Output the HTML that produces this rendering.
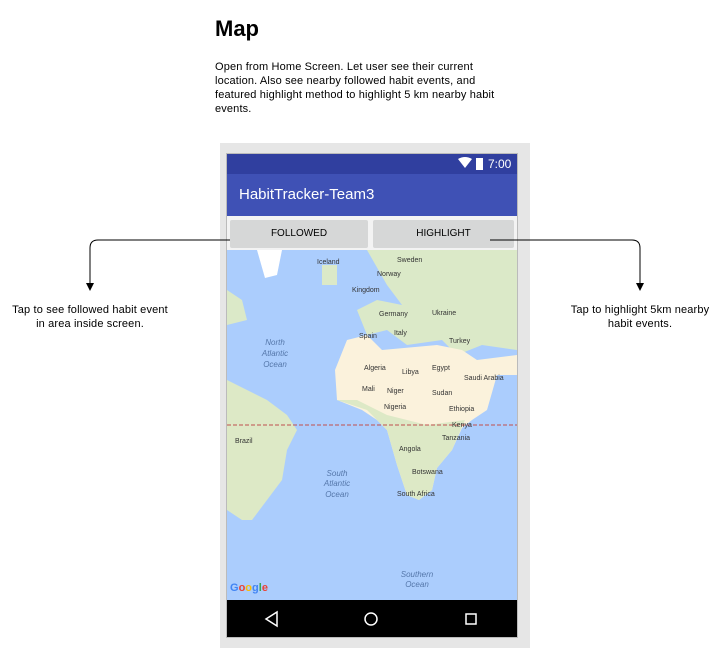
<!DOCTYPE html>
<html><head><style>
body{margin:0;width:721px;height:648px;background:#fff;font-family:"Liberation Sans",Arial,sans-serif;position:relative;overflow:hidden}
.a{position:absolute}
</style></head><body>
<div class="a" style="left:215px;top:16px;font-size:22px;font-weight:bold;color:#000">Map</div>
<div class="a" style="left:215px;top:60px;white-space:nowrap;font-size:11px;letter-spacing:0.15px;line-height:14px;color:#000">Open from Home Screen. Let user see their current<br>location. Also see nearby followed habit events, and<br>featured highlight method to highlight 5 km nearby habit<br>events.</div>
<div class="a" style="left:220px;top:143px;width:310px;height:505px;background:#e6e6e6"></div>
<div class="a" style="left:226px;top:153px;width:292px;height:485px;background:#bbb"></div>
<div class="a" style="left:227px;top:154px;width:290px;height:20px;background:#303f9f"></div>
<div class="a" style="left:488px;top:157px;font-size:12px;color:#fff">7:00</div>
<svg class="a" style="left:458px;top:157px" width="30" height="14"><path d="M0 2 Q7 -2 14 2 L7 11Z" fill="#fff"/><rect x="18" y="1" width="7" height="12" fill="#fff"/></svg>
<div class="a" style="left:227px;top:174px;width:290px;height:42px;background:#3f51b5"></div>
<div class="a" style="left:239px;top:186px;font-size:15px;color:#fff">HabitTracker-Team3</div>
<div class="a" style="left:227px;top:216px;width:290px;height:34px;background:#f3f3f3"></div>
<div class="a" style="left:230px;top:220px;width:138px;height:28px;background:#d6d7d7;border-radius:2px;font-size:10px;text-align:center;line-height:28px">FOLLOWED</div>
<div class="a" style="left:373px;top:220px;width:141px;height:28px;background:#d6d7d7;border-radius:2px;font-size:10px;text-align:center;line-height:28px">HIGHLIGHT</div>
<svg class="a" style="left:227px;top:250px" width="290" height="350">
<rect width="290" height="350" fill="#abcdfd"/>
<path d="M140 0 L290 0 L290 100 L255 95 L230 105 L215 90 L180 95 L160 80 L140 85 L130 60 L150 50 L175 55 L160 35 Z" fill="#dbe9c8"/>
<path d="M30 0 L55 0 L50 25 L38 28 Z" fill="#fff"/>
<path d="M95 15 L110 15 L110 35 L95 35Z" fill="#dbe9c8"/>
<path d="M120 90 L140 85 L155 100 L210 95 L235 100 L250 110 L290 105 L290 125 L270 125 L260 160 L245 170 L235 178 L225 200 L210 218 L205 240 L192 250 L180 245 L170 215 L160 180 L150 170 L135 160 L110 150 L108 120 Z" fill="#fbf2dc"/>
<path d="M110 150 L140 160 L160 180 L170 215 L180 245 L192 250 L205 240 L210 218 L225 200 L238 170 L200 175 L160 165 L130 150Z" fill="#dde9c6"/>
<path d="M0 130 L40 150 L60 165 L70 180 L60 200 L55 230 L40 250 L25 270 L15 270 L0 260 Z" fill="#dde9c6"/>
<path d="M0 40 L15 50 L20 70 L0 75Z" fill="#dbe9c8"/>
<path d="M0 175 L290 175" stroke="#c0504d" stroke-dasharray="4 2" stroke-width="1"/>
<text x="48" y="95" font-size="8" font-style="italic" fill="#5577aa" text-anchor="middle">North</text>
<text x="48" y="106" font-size="8" font-style="italic" fill="#5577aa" text-anchor="middle">Atlantic</text>
<text x="48" y="117" font-size="8" font-style="italic" fill="#5577aa" text-anchor="middle">Ocean</text>
<text x="110" y="226" font-size="8" font-style="italic" fill="#5577aa" text-anchor="middle">South</text>
<text x="110" y="236" font-size="8" font-style="italic" fill="#5577aa" text-anchor="middle">Atlantic</text>
<text x="110" y="247" font-size="8" font-style="italic" fill="#5577aa" text-anchor="middle">Ocean</text>
<text x="190" y="327" font-size="8" font-style="italic" fill="#5577aa" text-anchor="middle">Southern</text>
<text x="190" y="337" font-size="8" font-style="italic" fill="#5577aa" text-anchor="middle">Ocean</text>
<g font-size="7" fill="#333">
<text x="90" y="14">Iceland</text><text x="170" y="12">Sweden</text><text x="150" y="26">Norway</text>
<text x="125" y="42">Kingdom</text><text x="152" y="66">Germany</text><text x="205" y="65">Ukraine</text>
<text x="132" y="88">Spain</text><text x="167" y="85">Italy</text><text x="222" y="93">Turkey</text>
<text x="137" y="120">Algeria</text><text x="175" y="124">Libya</text><text x="205" y="120">Egypt</text>
<text x="237" y="130">Saudi Arabia</text><text x="135" y="141">Mali</text><text x="160" y="143">Niger</text>
<text x="205" y="145">Sudan</text><text x="157" y="159">Nigeria</text><text x="222" y="161">Ethiopia</text>
<text x="225" y="177">Kenya</text><text x="215" y="190">Tanzania</text><text x="8" y="193">Brazil</text>
<text x="172" y="201">Angola</text><text x="185" y="224">Botswana</text><text x="170" y="246">South Africa</text>
</g>
<text x="3" y="341" font-size="11" font-weight="bold"><tspan fill="#4285f4">G</tspan><tspan fill="#ea4335">o</tspan><tspan fill="#fbbc05">o</tspan><tspan fill="#4285f4">g</tspan><tspan fill="#34a853">l</tspan><tspan fill="#ea4335">e</tspan></text>
</svg>
<div class="a" style="left:227px;top:600px;width:290px;height:37px;background:#000"></div>
<svg class="a" style="left:227px;top:600px" width="290" height="37">
<path d="M50 12 L50 26 L39 19Z" fill="none" stroke="#fff" stroke-width="1.5"/>
<circle cx="144" cy="19" r="6" fill="none" stroke="#fff" stroke-width="1.5"/>
<rect x="239" y="14" width="10" height="10" fill="none" stroke="#fff" stroke-width="1.5"/>
</svg>
<svg class="a" style="left:0;top:0" width="721" height="648">
<path d="M230 240 L98 240 Q90 240 90 248 L90 285" fill="none" stroke="#000"/>
<path d="M86 283 L90 291 L94 283Z"/>
<path d="M490 240 L632 240 Q640 240 640 248 L640 285" fill="none" stroke="#000"/>
<path d="M636 283 L640 291 L644 283Z"/>
</svg>
<div class="a" style="left:0;top:303px;width:180px;text-align:center;white-space:nowrap;font-size:11px;letter-spacing:0.15px;line-height:14px">Tap to see followed habit event<br>in area inside screen.</div>
<div class="a" style="left:560px;top:303px;width:160px;text-align:center;white-space:nowrap;font-size:11px;letter-spacing:0.15px;line-height:14px">Tap to highlight 5km nearby<br>habit events.</div>
</body></html>
